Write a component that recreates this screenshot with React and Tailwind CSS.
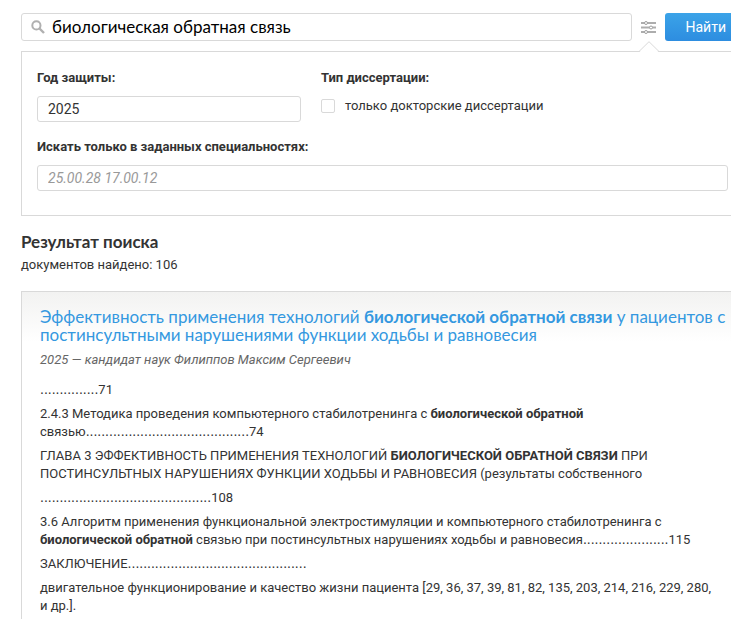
import React from "react";

const Leader = ({ dots }) => (
  <span className="text-sm leading-none font-['Liberation_Sans',sans-serif]">
    {".".repeat(dots)}
  </span>
);

const SearchIcon = () => (
  <svg
    className="w-[14px] h-[14px] shrink-0"
    viewBox="0 0 14 14"
    fill="none"
    stroke="#b0b0b0"
  >
    <circle cx="5.4" cy="5.4" r="4.1" strokeWidth="2" />
    <path d="M8.5 8.5L13 13" strokeWidth="2.4" />
  </svg>
);

const FiltersIcon = () => (
  <svg className="w-[15px] h-[13px]" viewBox="0 0 15 13" fill="#fff" stroke="#a0a0a0">
    <path d="M0 2H15M0 6.5H15M0 11H15" stroke="#adadad" strokeWidth="2" />
    <circle cx="5" cy="2" r="1.5" />
    <circle cx="10" cy="6.5" r="1.5" />
    <circle cx="5" cy="11" r="1.5" />
  </svg>
);

const SearchBar = () => {
  return (
    <div className="flex h-7">
      <label className="flex flex-1 items-center gap-[7px] rounded-[3px] border border-[#d9d9d9] pl-[9px]">
        <SearchIcon />
        <input
          type="text"
          aria-label="Поиск"
          defaultValue="биологическая обратная связь"
          className="min-w-0 flex-1 bg-transparent font-['Lato','Roboto',sans-serif] text-[17px] leading-6 text-black outline-none"
        />
      </label>
      <button
        type="button"
        aria-label="Фильтры"
        className="relative flex w-[33px] items-center justify-center"
      >
        <FiltersIcon />
        <svg
          className="absolute left-[7px] top-7 z-10 h-[11px] w-5"
          viewBox="0 0 20 11"
        >
          <path d="M0.5 11L10 0.7L19.5 11Z" fill="#fff" />
          <path d="M0 10.5L10 0.7L20 10.5" fill="none" stroke="#d9d9d9" />
        </svg>
      </button>
      <button
        type="button"
        className="rounded-l-[3px] bg-gradient-to-b from-[#3ba3e8] to-[#2d8de0] pl-[21px] pr-[5px] text-sm text-white"
      >
        Найти
      </button>
    </div>
  );
};

const Filters = () => {
  return (
    <div className="mt-[10px] border border-r-0 border-[#d9d9d9] pt-[17px] pb-6 pl-[15px] pr-[3px]">
      <div className="flex gap-5">
        <div className="w-[264px]">
          <label htmlFor="year" className="block font-bold">
            Год защиты:
          </label>
          <input
            id="year"
            type="text"
            defaultValue="2025"
            className="mt-[9px] block h-[26px] w-full rounded-[3px] border border-[#d9d9d9] px-[10px] text-sm outline-none"
          />
        </div>
        <fieldset>
          <legend className="font-bold">Тип диссертации:</legend>
          <label className="mt-[10px] flex items-center gap-[10px]">
            <input
              type="checkbox"
              className="h-[14px] w-[14px] appearance-none rounded-[2px] border border-[#d9d9d9] bg-white"
            />
            только докторские диссертации
          </label>
        </fieldset>
      </div>
      <label htmlFor="specialities" className="mt-4 block font-bold">
        Искать только в заданных специальностях:
      </label>
      <input
        id="specialities"
        type="text"
        placeholder="25.00.28 17.00.12"
        className="mt-[9px] block h-[26px] w-full rounded-[3px] border border-[#d9d9d9] px-[10px] text-sm outline-none placeholder:italic placeholder:text-[#999]"
      />
    </div>
  );
};

const Result = () => {
  return (
    <div className="mt-[17px] border border-r-0 border-b-0 border-[#d9d9d9] bg-[linear-gradient(#f2f2f1,#fff_50px)] pt-4 pb-4 pl-[18px]">
      <h3 className="font-['Lato','Roboto',sans-serif] text-[17px] leading-[18px]">
        <a href="#" className="text-[#3498e0]">
          Эффективность применения технологий <b>биологической обратной связи</b> у пациентов с
          <br />
          постинсультными нарушениями функции ходьбы и равновесия
        </a>
      </h3>
      <p className="mt-[7px] italic text-[#666]">
        2025 — кандидат наук Филиппов Максим Сергеевич
      </p>
      <div className="mt-3 flex flex-col gap-[6px]">
        <p>
          <Leader dots={15} />
          71
        </p>
        <p>
          2.4.3 Методика проведения компьютерного стабилотренинга с <b>биологической обратной</b>
          <br />
          связью
          <Leader dots={42} />
          74
        </p>
        <p>
          ГЛАВА 3 ЭФФЕКТИВНОСТЬ ПРИМЕНЕНИЯ ТЕХНОЛОГИЙ <b>БИОЛОГИЧЕСКОЙ ОБРАТНОЙ СВЯЗИ</b> ПРИ
          <br />
          ПОСТИНСУЛЬТНЫХ НАРУШЕНИЯХ ФУНКЦИИ ХОДЬБЫ И РАВНОВЕСИЯ (результаты собственного
        </p>
        <p>
          <Leader dots={44} />
          108
        </p>
        <p>
          3.6 Алгоритм применения функциональной электростимуляции и компьютерного стабилотренинга с
          <br />
          <b>биологической обратной</b> связью при постинсультных нарушениях ходьбы и равновесия
          <Leader dots={22} />
          115
        </p>
        <p>
          ЗАКЛЮЧЕНИЕ
          <Leader dots={46} />
        </p>
        <p>
          двигательное функционирование и качество жизни пациента [29, 36, 37, 39, 81, 82, 135, 203, 214, 216, 229, 280,
          <br />
          и др.].
        </p>
      </div>
    </div>
  );
};

export default function App() {
  return (
    <main className="bg-white pl-[21px] pt-[13px] font-['Roboto','Noto_Sans',sans-serif] text-[13px] leading-[18px] text-[#333]">
      <SearchBar />
      <Filters />
      <h2 className="mt-[14px] font-['Lato','Roboto',sans-serif] text-[17px] leading-6 font-bold">
        Результат поиска
      </h2>
      <p className="mt-[2px]">документов найдено: 106</p>
      <Result />
    </main>
  );
}
